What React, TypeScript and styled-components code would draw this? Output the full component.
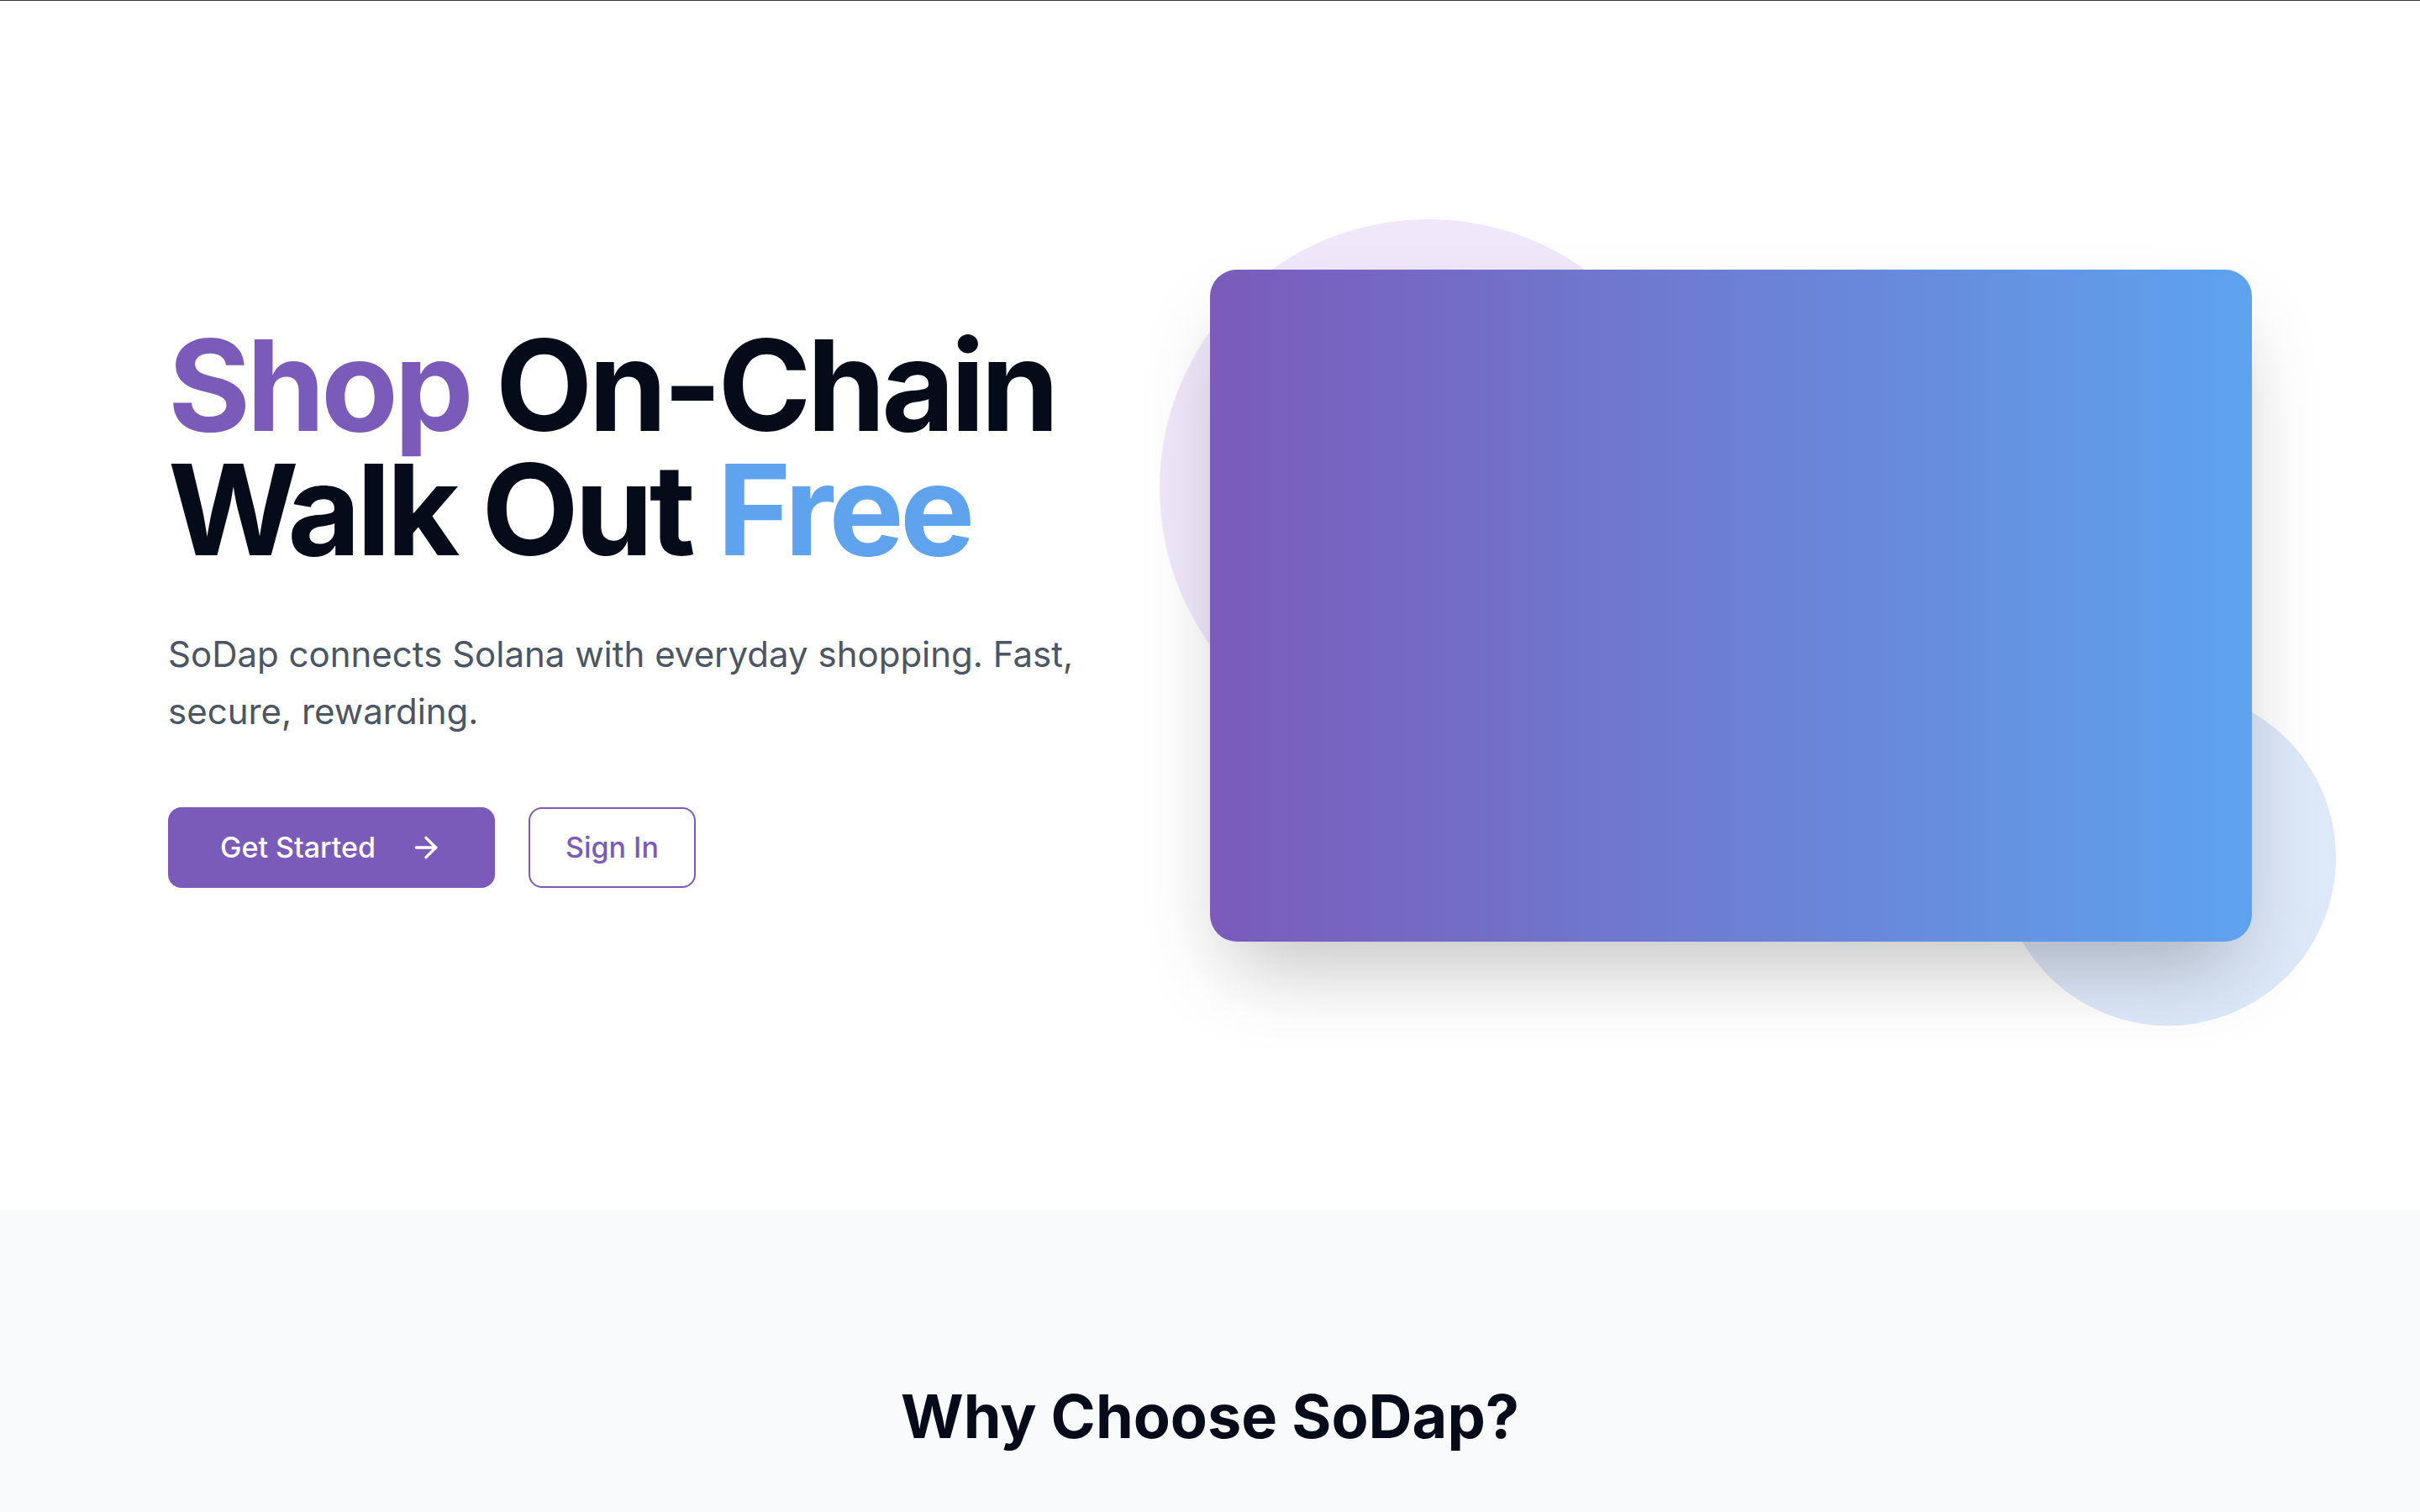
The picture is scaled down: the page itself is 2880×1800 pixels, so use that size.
import React from "react";
import styled, { createGlobalStyle } from "styled-components";
import { ArrowRight } from "lucide-react";

const GlobalStyle = createGlobalStyle`
  html, body {
    margin: 0;
    padding: 0;
    background: #ffffff;
  }
  body {
    font-family: Inter, "Noto Sans", "Liberation Sans", sans-serif;
    border-top: 1px solid #3c3c3c;
    -webkit-font-smoothing: antialiased;
  }
  * { box-sizing: border-box; }
`;

const Hero = styled.section`
  height: 1439px;
  display: flex;
  align-items: center;
`;

const Container = styled.div`
  width: 2480px;
  margin: 0 auto;
  display: grid;
  grid-template-columns: 1fr 1fr;
  align-items: center;
`;

const TextColumn = styled.div`
  display: flex;
  flex-direction: column;
  align-items: flex-start;
`;

const Title = styled.h1`
  margin: 0;
  font-size: 150px;
  line-height: 148px;
  font-weight: 700;
  letter-spacing: -0.032em;
  color: #060b19;
`;

const Accent = styled.span<{ $color: string }>`
  color: ${(p) => p.$color};
`;

const Lead = styled.p`
  margin: 64px 0 0;
  max-width: 1180px;
  font-size: 42px;
  line-height: 68px;
  color: #4b5563;
`;

const Actions = styled.div`
  margin-top: 80px;
  display: flex;
  gap: 40px;
`;

const ButtonBase = styled.button`
  height: 96px;
  display: inline-flex;
  align-items: center;
  border-radius: 16px;
  font-family: inherit;
  font-size: 34px;
  font-weight: 500;
  cursor: pointer;
`;

const PrimaryButton = styled(ButtonBase)`
  padding: 0 62px;
  gap: 40px;
  background: #7a5bba;
  color: #ffffff;
  border: none;
`;

const OutlineButton = styled(ButtonBase)`
  padding: 0 42px;
  background: #ffffff;
  color: #7a5bba;
  border: 2px solid #7a5bba;
`;

const Visual = styled.div`
  position: relative;
  height: 800px;
`;

const Blob = styled.div<{ $size: number; $color: string }>`
  position: absolute;
  width: ${(p) => p.$size}px;
  height: ${(p) => p.$size}px;
  border-radius: 50%;
  background: ${(p) => p.$color};
`;

const PurpleBlob = styled(Blob)`
  top: -60px;
  left: -60px;
`;

const BlueBlob = styled(Blob)`
  right: -100px;
  bottom: -100px;
`;

const Card = styled.div`
  position: relative;
  height: 800px;
  border-radius: 32px;
  background: linear-gradient(90deg, #7a5bba 0%, #5ea3ee 100%);
  box-shadow: 0 50px 100px -24px rgba(0, 0, 0, 0.25);
`;

const Features = styled.section`
  background: #f9fafb;
  padding: 206px 0 200px;
  text-align: center;
`;

const SectionTitle = styled.h2`
  margin: 0;
  font-size: 72px;
  line-height: 80px;
  font-weight: 700;
  color: #060b19;
`;

export default function App() {
  return (
    <>
      <GlobalStyle />
      <Hero>
        <Container>
          <TextColumn>
            <Title>
              <Accent $color="#7a5bba">Shop</Accent> On-Chain
              <br />
              Walk Out <Accent $color="#5fa3ee">Free</Accent>
            </Title>
            <Lead>
              SoDap connects Solana with everyday shopping. Fast, secure,
              rewarding.
            </Lead>
            <Actions>
              <PrimaryButton>
                Get Started
                <ArrowRight size={40} strokeWidth={2} />
              </PrimaryButton>
              <OutlineButton>Sign In</OutlineButton>
            </Actions>
          </TextColumn>
          <Visual>
            <PurpleBlob $size={640} $color="#f0e7fb" />
            <BlueBlob $size={400} $color="#dde8f9" />
            <Card />
          </Visual>
        </Container>
      </Hero>
      <Features>
        <SectionTitle>Why Choose SoDap?</SectionTitle>
      </Features>
    </>
  );
}
